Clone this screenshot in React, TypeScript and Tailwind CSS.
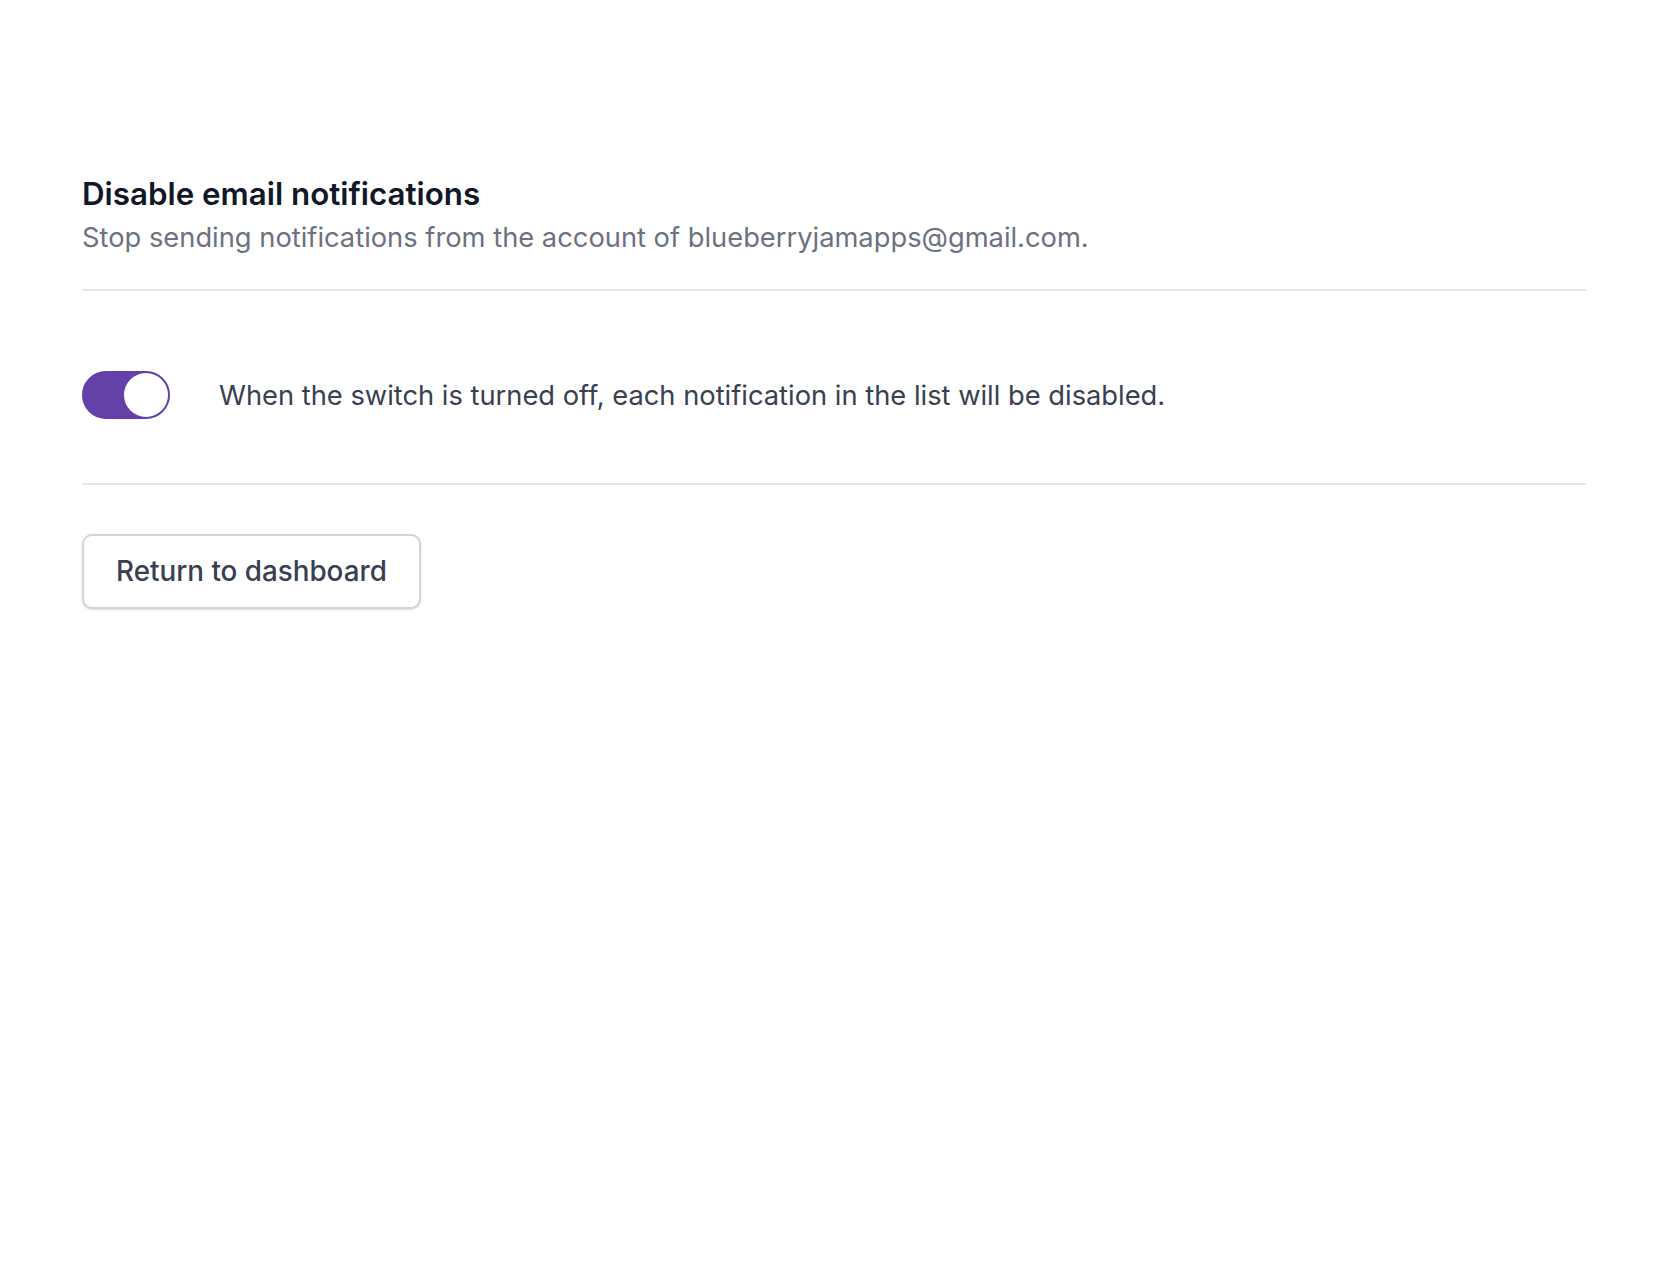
import React from "react";

export default function App() {
  return (
    <div
      className="min-h-screen bg-white pl-[82px] pr-[86px] pt-[173px]"
      style={{ fontFamily: "Inter, 'Noto Sans', sans-serif" }}
    >
      <h1 className="text-[31.3px] leading-[42px] font-semibold text-[#111827]">
        Disable email notifications
      </h1>
      <p className="mt-[2px] text-[27.3px] leading-[42px] text-[#6b7280]">
        Stop sending notifications from the account of blueberryjamapps@gmail.com.
      </p>
      <div className="mt-[30px] h-[2px] bg-[#e5e7eb]" />
      <div className="flex items-center gap-[49px] pt-[80px] pb-[64px]">
        <button
          type="button"
          className="relative flex h-[48px] w-[88px] shrink-0 items-center rounded-full border-[2px] border-[#6341a8] bg-[#6341a8]"
        >
          <span className="absolute right-0 top-0 h-[44px] w-[44px] rounded-full bg-white" />
        </button>
        <span className="pt-[2px] text-[27.3px] leading-[42px] text-[#374151]">
          When the switch is turned off, each notification in the list will be disabled.
        </span>
      </div>
      <div className="h-[2px] bg-[#e5e7eb]" />
      <button
        type="button"
        className="mt-[49px] h-[75px] rounded-[10px] border-[2px] border-[#d1d5db] bg-white px-[32px] text-[27.8px] font-medium text-[#374151] shadow-sm"
      >
        Return to dashboard
      </button>
    </div>
  );
}
